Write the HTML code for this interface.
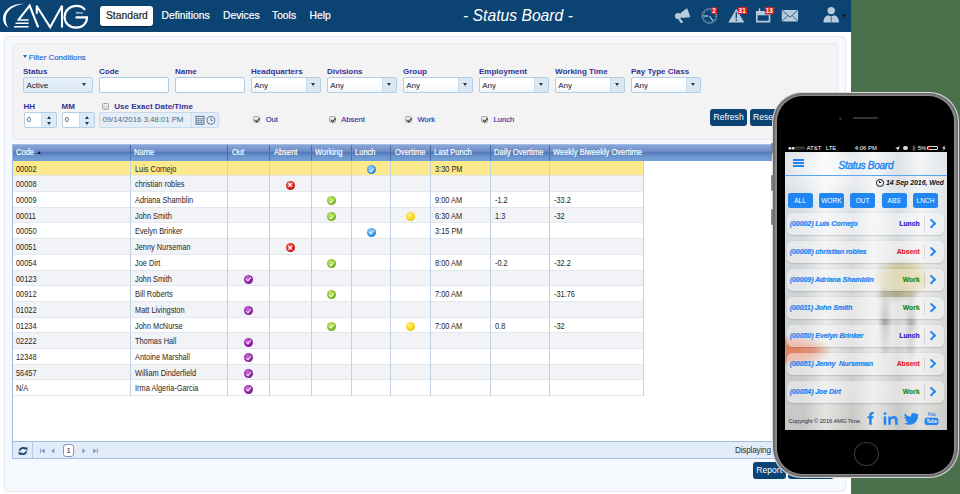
<!DOCTYPE html>
<html><head><meta charset="utf-8">
<style>
*{box-sizing:border-box;margin:0;padding:0}
html,body{width:960px;height:494px;overflow:hidden;background:#fff;font-family:"Liberation Sans",sans-serif;position:relative}
.abs{position:absolute}
#green{left:851px;top:0;width:109px;height:494px;background:#4b714c}
#hdr{left:0;top:0;width:851px;height:31.7px;background:#0b4373}
.nav{position:absolute;top:9.5px;color:#fff;font-size:10.3px;line-height:12px;white-space:nowrap;-webkit-text-stroke:0.2px currentColor}
#std{left:99.5px;top:5.5px;width:53px;height:20px;background:#fff;border-radius:3px;box-shadow:0 1px 1px rgba(0,0,0,.45)}
#title{left:463px;top:7.1px;color:#fff;font-style:italic;font-size:15.7px;line-height:18px;white-space:nowrap}
#outer{left:4px;top:36.3px;width:841.5px;height:455.5px;background:#f5f8fd;border:1px solid #e4e9f2;border-radius:4px}
#filt{left:12.2px;top:43.4px;width:825.8px;height:96.3px;background:#f3f3f3;border:1px solid #e9e9e9;border-radius:2.5px}
.lbl{position:absolute;color:#323296;font-weight:bold;font-size:8px;line-height:10px;white-space:nowrap}
.txt{position:absolute;font-size:7.6px;line-height:10px;white-space:nowrap}
.sel{position:absolute;top:77.1px;height:15.5px;width:69.5px;border:1px solid #b3cfe5;border-radius:2px;background:linear-gradient(#fff 40%,#edf4fa);font-size:8px;line-height:15px;padding-left:2.2px;color:#13233a}
.sel i{position:absolute;right:0;top:0;width:14px;height:13.5px;border-left:1px solid #c8dcec;background:#dbe8f3}
.sel i:after{content:"";position:absolute;left:4.4px;top:5.2px;border-left:2.5px solid transparent;border-right:2.5px solid transparent;border-top:3.5px solid #1d3b5c}
.sel.st{background:linear-gradient(#e8f1f9,#dae8f4)}
.sel.st i{background:none;border-left:none}
.inp{position:absolute;top:77.3px;height:15.7px;width:69.5px;border:1px solid #a9cbe3;border-radius:2px;background:#fff}
.spin{position:absolute;top:112.3px;height:15.3px;width:33.2px;border:1px solid #b3cfe5;border-radius:2px;background:#fff;font-size:7.6px;line-height:13px;padding-left:2.3px;color:#1f3550}
.spin i{position:absolute;right:0;top:0;width:14.3px;height:13.3px;border-left:1px solid #c8dcec;background:#deebf5}
.spin i:before{content:"";position:absolute;left:4.3px;top:2.3px;border-left:2.6px solid transparent;border-right:2.6px solid transparent;border-bottom:3.4px solid #1d3b5c}
.spin i:after{content:"";position:absolute;left:4.3px;top:8.6px;border-left:2.6px solid transparent;border-right:2.6px solid transparent;border-top:3.4px solid #1d3b5c}
.cb{position:absolute;width:7px;height:7px;border:1px solid #a8a8a8;border-radius:1.5px;background:linear-gradient(#eaeaea,#d4d4d4)}
.cb.on:after{content:"";position:absolute;left:1.6px;top:0.2px;width:2px;height:3.6px;border-right:1.2px solid #222;border-bottom:1.2px solid #222;transform:rotate(40deg)}
.btn{position:absolute;background:#0b4373;color:#fff;border-radius:3px;font-size:8.6px;line-height:16px;text-align:center;white-space:nowrap}
#grid{left:12px;top:143.7px;width:826px;height:315.4px;background:#fff;overflow:hidden}
#gbord{left:12px;top:143.7px;width:826px;height:315.4px;border:1px solid #9fbde3;pointer-events:none}
#ghd{position:absolute;left:0;top:0;width:826px;height:17px;background:linear-gradient(#7093cb 0%,#87a4d6 8%,#7896cc 30%,#6a89c4 45%,#4f76b6 52%,#6289c4 62%,#6f99d2 80%,#74a0d8 100%)}
.gh{position:absolute;top:0;height:16.5px;border-right:1px solid #4a6ca8;color:#fff;font-size:8.2px;line-height:18px;-webkit-text-stroke:0.15px #fff;padding-left:3.7px;white-space:nowrap}
.sort{display:inline-block;margin-left:3px;vertical-align:1px;border-left:2.5px solid transparent;border-right:2.5px solid transparent;border-bottom:3px solid #0b1e45}
.gr{position:absolute;left:0;width:632.3px;height:15.69px;border-bottom:1px solid #e3e8ef;background:#fff}
.gr.alt{background:#f2f3f6}
.gr.ys{background:#fbe98c}
.gc{position:absolute;top:0;height:15.69px;border-right:1px solid #c3d1e4;font-size:8.2px;line-height:18.3px;padding-left:4.1px;color:#1e1e1e;white-space:nowrap;overflow:hidden}
.ic{position:absolute;left:50%;top:50%;width:9px;height:9px;margin:-3.6px 0 0 -4.5px;border-radius:50%}
.icA{background:radial-gradient(circle at 40% 35%,#ff6b5e,#cc1b10 60%,#9d0b05)}
.icW{background:radial-gradient(circle at 40% 35%,#c9ec6a,#7fb52a 60%,#5a8c14)}
.icL{background:radial-gradient(circle at 40% 35%,#9fd2ff,#2e8ee8 60%,#1768c4)}
.icY{background:radial-gradient(circle at 40% 35%,#fff48a,#f4cf10 60%,#d9a900)}
.icO{background:radial-gradient(circle at 40% 35%,#d26de0,#8a1a9c 60%,#5e0a70)}
.icA:after{content:"\00d7";position:absolute;left:0;top:-1.5px;width:9px;text-align:center;color:#fff;font-size:9px;line-height:12px;font-weight:bold}
.icW:after,.icL:after,.icO:after{content:"";position:absolute;left:3.1px;top:1.6px;width:2px;height:4px;border-right:1.2px solid #fff;border-bottom:1.2px solid #fff;transform:rotate(40deg);opacity:.9}
#pbar{position:absolute;left:0;top:297.7px;width:826px;height:17.7px;background:#e2ecf9;border-top:1px solid #9fbde3}
.pb{position:absolute;top:49px;width:25px;height:15.2px;background:#1f86f2;border-radius:2.5px;color:#fff;font-size:6.6px;line-height:15.2px;text-align:center;white-space:nowrap}
.it{position:absolute;left:2px;width:157px;height:22px;border-radius:5px;background:rgba(250,250,250,.45);box-shadow:0 0.5px 1.5px rgba(0,0,0,.15)}
.nm{position:absolute;left:2.7px;top:6px;color:#1f86f2;font-style:italic;font-weight:bold;font-size:7.2px;line-height:10px;white-space:nowrap;letter-spacing:-0.15px;-webkit-text-stroke:0.2px #1f86f2}
.stt{position:absolute;right:24.3px;top:6px;font-weight:bold;font-size:6.8px;line-height:10px;white-space:nowrap;-webkit-text-stroke:0.15px currentColor}
.dv{position:absolute;left:137.2px;top:4px;width:0.7px;height:14px;background:rgba(0,0,0,.12)}
.chev{position:absolute;left:140.6px;top:7.2px;width:6.6px;height:6.6px;border-right:2px solid #1f86f2;border-top:2px solid #1f86f2;transform:rotate(45deg)}
.t{display:inline-block;transform:scaleX(.9);transform-origin:0 50%}
.gh .t{transform:scaleX(.92)}
</style></head>
<body>
<div id="green" class="abs"></div>
<div id="hdr" class="abs">
  <svg class="abs" style="left:0;top:0" width="95" height="32" viewBox="0 0 95 32">
    <path d="M24.4 3.8 C13 3.2 3 9.3 3 18.3 C3 22.7 5.3 25.9 8.4 27.7 C6.9 25.4 5.7 22.3 5.7 18.9 C5.7 11.2 12.6 5.6 24.4 3.8Z" fill="#fff"/>
    <g fill="none" stroke="#fff" stroke-width="2.1">
      <path d="M18.6 19.6 L29.7 5.6 L38.2 27.4"/>
      <path d="M36.8 5.6 L36.8 13.8 M36.5 5.8 L50.2 27.3 L62 5.8 L62 27.4"/>
      <path d="M85 9.8 C83 7.2 80 5.9 76.4 5.9 C69.6 5.9 64.6 10.8 64.6 16.9 C64.6 23.2 69.6 27.6 76.2 27.6 C82.6 27.6 87 23.2 87 17.4 L75.5 17.4"/>
    </g>
    <g stroke="#fff" stroke-width="1.5">
      <path d="M17.4 19.9 H28.6 M15.6 23.3 H28.6 M14 26.7 H28.6"/>
    </g>
    <text x="75.8" y="14.4" font-size="4" fill="#fff" font-family="Liberation Sans" letter-spacing="-0.1">time</text>
  </svg>
  <div id="std" class="abs"></div>
  <div class="nav" style="left:106px;color:#222">Standard</div>
  <div class="nav" style="left:161.5px">Definitions</div>
  <div class="nav" style="left:223px">Devices</div>
  <div class="nav" style="left:272px">Tools</div>
  <div class="nav" style="left:309.5px">Help</div>
  <div id="title" class="abs">- Status Board -</div>
  <!-- icons -->
  <svg class="abs" style="left:670px;top:0" width="181" height="32" viewBox="670 0 181 32">
    <g fill="#b6cbdc">
      <ellipse cx="678.2" cy="16" rx="3.3" ry="3.1"/>
      <path d="M680.6 13.1 L686.6 8.4 Q687.2 8.3 687.5 9 L690.2 16.6 Q690.2 17.2 689.5 17.2 L681.6 17.9 Z"/>
      <path d="M678.3 19.6 L680.6 18.7 L683.4 22.3 L681 23.3 Z"/>
      <!-- warning -->
      <path d="M736.3 8.8 L744.3 22.6 L728.3 22.6Z"/>
      <!-- calendar -->
      <path d="M756 11 H770.3 V22.4 H756Z M757.6 15.3 V20.8 H768.7 V15.3Z" fill-rule="evenodd"/>
      <path d="M758.8 8.3 h1.4 v4 h-1.4z"/>
      <!-- envelope -->
      <rect x="781.8" y="9.9" width="16.3" height="11.5" rx="0.6"/>
      <!-- user -->
      <circle cx="831.2" cy="10.6" r="3.7"/>
      <path d="M823.4 22.4 Q823.6 16.6 827.8 15.2 L831.2 16.2 L834.6 15.2 Q838.8 16.6 839 22.4 Z"/>
    </g>
    <g fill="none" stroke="#b6cbdc">
      <circle cx="709.5" cy="16" r="7.3" stroke-width="0.8" opacity="0.8"/>
      <circle cx="709.5" cy="16" r="6" stroke-width="1.2" stroke-dasharray="0.7 2.44" opacity="0.8"/>
      <path d="M703.4 16 L708.2 16" stroke-width="1.3"/>
      <path d="M709.5 16 L713.1 20.9" stroke-width="1.1"/>
    </g>
    <path d="M735.6 12.3 h1.4 v6 h-1.4z M735.6 19.6 h1.4 v1.4 h-1.4z" fill="#0b4373"/>
    <path d="M842.2 14.6 h4.4 l-2.2 2.6z" fill="#111"/>
    <g fill="none" stroke="#0b4373" stroke-width="0.8">
      <path d="M782.3 10.5 L790 17.2 L797.6 10.5 M782.3 20.9 L787.6 15.8 M797.6 20.9 L792.4 15.8"/>
      <path d="M831.2 16.4 L831.2 22.2" stroke-width="0.7"/>
    </g>
    <g fill="#d91e18">
      <rect x="711" y="7.3" width="6" height="6.8"/>
      <rect x="737.9" y="7.1" width="9.2" height="7"/>
      <rect x="764.9" y="7.1" width="9.3" height="7.3"/>
    </g>
    <g fill="#fff" font-family="Liberation Sans" font-weight="bold" font-size="6.4">
      <text x="712.2" y="13">2</text>
      <text x="738.6" y="13">31</text>
      <text x="765.7" y="13.2">13</text>
    </g>
  </svg>
</div>
<div id="outer" class="abs"></div>
<div id="filt" class="abs"></div>

<!-- filter content -->
<div class="txt" style="left:23px;top:52.6px;color:#1b6ad6;font-size:7.9px;-webkit-text-stroke:0.15px #1b6ad6"><span style="display:inline-block;width:0;height:0;border-left:2.8px solid transparent;border-right:2.8px solid transparent;border-top:3.6px solid #1b6ad6;vertical-align:1.2px;margin-right:1.8px"></span>Filter Conditions</div>
<div class="lbl" style="left:23px;top:67px">Status</div>
<div class="lbl" style="left:99px;top:67px">Code</div>
<div class="lbl" style="left:175px;top:67px">Name</div>
<div class="lbl" style="left:251px;top:67px">Headquarters</div>
<div class="lbl" style="left:327px;top:67px">Divisions</div>
<div class="lbl" style="left:403px;top:67px">Group</div>
<div class="lbl" style="left:479px;top:67px">Employment</div>
<div class="lbl" style="left:555px;top:67px">Working Time</div>
<div class="lbl" style="left:631px;top:67px">Pay Type Class</div>

<div class="sel st" style="left:23.3px">Active<i></i></div>
<div class="inp" style="left:99.3px"></div>
<div class="inp" style="left:175px"></div>
<div class="sel" style="left:251px">Any<i></i></div>
<div class="sel" style="left:327px">Any<i></i></div>
<div class="sel" style="left:403px">Any<i></i></div>
<div class="sel" style="left:479px">Any<i></i></div>
<div class="sel" style="left:555px">Any<i></i></div>
<div class="sel" style="left:631px">Any<i></i></div>

<div class="lbl" style="left:23.5px;top:101.8px">HH</div>
<div class="lbl" style="left:61.5px;top:101.8px">MM</div>
<div class="cb" style="left:101.7px;top:102.8px"></div>
<div class="lbl" style="left:114.3px;top:102px">Use Exact Date/Time</div>
<div class="spin" style="left:23.5px">0<i></i></div>
<div class="spin" style="left:61.5px">0<i></i></div>
<div class="abs" style="left:99px;top:112px;width:119.6px;height:15.5px;border:1px solid #c6daeb;border-radius:2px;background:#e5eef6;font-size:7.9px;line-height:13.8px;padding-left:2.4px;color:#4d6c88;white-space:nowrap;letter-spacing:-0.05px">09/14/2016 3:48:01 PM
  <div class="abs" style="left:91px;top:0;width:27px;height:13.5px;border-left:1px solid #cfdfec"></div>
  <svg class="abs" style="left:95px;top:2px" width="22" height="10" viewBox="0 0 22 10">
    <g fill="none" stroke="#4b6f8e" stroke-width="0.9">
      <rect x="1" y="1.3" width="8" height="8"/>
      <path d="M1 3.3 H9 M3.6 3.3 V9.3 M6.3 3.3 V9.3 M1 5.3 H9 M1 7.3 H9" stroke-width="0.6"/>
      <circle cx="15.9" cy="5.3" r="4"/>
      <path d="M15.9 2.8 V5.5 H17.8"/>
    </g>
  </svg>
</div>
<div class="cb on" style="left:253px;top:116px"></div>
<div class="txt" style="left:265.7px;top:114.8px;color:#3434a4;-webkit-text-stroke:0.15px #3434a4">Out</div>
<div class="cb on" style="left:329.2px;top:116px"></div>
<div class="txt" style="left:341.2px;top:114.8px;color:#3434a4;-webkit-text-stroke:0.15px #3434a4">Absent</div>
<div class="cb on" style="left:405px;top:116px"></div>
<div class="txt" style="left:417.5px;top:114.8px;color:#3434a4;-webkit-text-stroke:0.15px #3434a4">Work</div>
<div class="cb on" style="left:481px;top:116px"></div>
<div class="txt" style="left:493.5px;top:114.8px;color:#3434a4;-webkit-text-stroke:0.15px #3434a4">Lunch</div>
<div class="btn" style="left:710px;top:109px;width:37.3px;height:16.7px">Refresh</div>
<div class="btn" style="left:750px;top:109px;width:40px;height:16.7px;text-align:left;padding-left:3px">Reset</div>

<div id="grid" class="abs">
<div id="ghd"></div>
<div class="gh" style="left:0.00px;width:118.50px"><span class="t">Code<span class="sort"></span></span></div>
<div class="gh" style="left:118.50px;width:97.75px"><span class="t">Name</span></div>
<div class="gh" style="left:216.25px;width:41.75px"><span class="t">Out</span></div>
<div class="gh" style="left:258.00px;width:41.50px"><span class="t">Absent</span></div>
<div class="gh" style="left:299.50px;width:40.25px"><span class="t">Working</span></div>
<div class="gh" style="left:339.75px;width:39.50px"><span class="t">Lunch</span></div>
<div class="gh" style="left:379.25px;width:39.50px"><span class="t">Overtime</span></div>
<div class="gh" style="left:418.75px;width:59.75px"><span class="t">Last Punch</span></div>
<div class="gh" style="left:478.50px;width:59.00px"><span class="t">Daily Overtime</span></div>
<div class="gh" style="left:537.50px;width:94.80px;border-right:none"><span class="t">Weekly Biweekly Overtime</span></div>
<div class="gr ys" style="top:17.00px">
<div class="gc" style="left:0.00px;width:118.50px"><span class="t">00002</span></div>
<div class="gc" style="left:118.50px;width:97.75px"><span class="t">Luis Cornejo</span></div>
<div class="gc" style="left:216.25px;width:41.75px"></div>
<div class="gc" style="left:258.00px;width:41.50px"></div>
<div class="gc" style="left:299.50px;width:40.25px"></div>
<div class="gc" style="left:339.75px;width:39.50px"><b class="ic icL"></b></div>
<div class="gc" style="left:379.25px;width:39.50px"></div>
<div class="gc" style="left:418.75px;width:59.75px"><span class="t">3:30 PM</span></div>
<div class="gc" style="left:478.50px;width:59.00px"></div>
<div class="gc" style="left:537.50px;width:94.80px"></div>
</div>
<div class="gr alt" style="top:32.69px">
<div class="gc" style="left:0.00px;width:118.50px"><span class="t">00008</span></div>
<div class="gc" style="left:118.50px;width:97.75px"><span class="t">christian robles</span></div>
<div class="gc" style="left:216.25px;width:41.75px"></div>
<div class="gc" style="left:258.00px;width:41.50px"><b class="ic icA"></b></div>
<div class="gc" style="left:299.50px;width:40.25px"></div>
<div class="gc" style="left:339.75px;width:39.50px"></div>
<div class="gc" style="left:379.25px;width:39.50px"></div>
<div class="gc" style="left:418.75px;width:59.75px"></div>
<div class="gc" style="left:478.50px;width:59.00px"></div>
<div class="gc" style="left:537.50px;width:94.80px"></div>
</div>
<div class="gr" style="top:48.38px">
<div class="gc" style="left:0.00px;width:118.50px"><span class="t">00009</span></div>
<div class="gc" style="left:118.50px;width:97.75px"><span class="t">Adriana Shamblin</span></div>
<div class="gc" style="left:216.25px;width:41.75px"></div>
<div class="gc" style="left:258.00px;width:41.50px"></div>
<div class="gc" style="left:299.50px;width:40.25px"><b class="ic icW"></b></div>
<div class="gc" style="left:339.75px;width:39.50px"></div>
<div class="gc" style="left:379.25px;width:39.50px"></div>
<div class="gc" style="left:418.75px;width:59.75px"><span class="t">9:00 AM</span></div>
<div class="gc" style="left:478.50px;width:59.00px"><span class="t">-1.2</span></div>
<div class="gc" style="left:537.50px;width:94.80px"><span class="t">-33.2</span></div>
</div>
<div class="gr alt" style="top:64.07px">
<div class="gc" style="left:0.00px;width:118.50px"><span class="t">00011</span></div>
<div class="gc" style="left:118.50px;width:97.75px"><span class="t">John Smith</span></div>
<div class="gc" style="left:216.25px;width:41.75px"></div>
<div class="gc" style="left:258.00px;width:41.50px"></div>
<div class="gc" style="left:299.50px;width:40.25px"><b class="ic icW"></b></div>
<div class="gc" style="left:339.75px;width:39.50px"></div>
<div class="gc" style="left:379.25px;width:39.50px"><b class="ic icY"></b></div>
<div class="gc" style="left:418.75px;width:59.75px"><span class="t">6:30 AM</span></div>
<div class="gc" style="left:478.50px;width:59.00px"><span class="t">1.3</span></div>
<div class="gc" style="left:537.50px;width:94.80px"><span class="t">-32</span></div>
</div>
<div class="gr" style="top:79.76px">
<div class="gc" style="left:0.00px;width:118.50px"><span class="t">00050</span></div>
<div class="gc" style="left:118.50px;width:97.75px"><span class="t">Evelyn Brinker</span></div>
<div class="gc" style="left:216.25px;width:41.75px"></div>
<div class="gc" style="left:258.00px;width:41.50px"></div>
<div class="gc" style="left:299.50px;width:40.25px"></div>
<div class="gc" style="left:339.75px;width:39.50px"><b class="ic icL"></b></div>
<div class="gc" style="left:379.25px;width:39.50px"></div>
<div class="gc" style="left:418.75px;width:59.75px"><span class="t">3:15 PM</span></div>
<div class="gc" style="left:478.50px;width:59.00px"></div>
<div class="gc" style="left:537.50px;width:94.80px"></div>
</div>
<div class="gr alt" style="top:95.45px">
<div class="gc" style="left:0.00px;width:118.50px"><span class="t">00051</span></div>
<div class="gc" style="left:118.50px;width:97.75px"><span class="t">Jenny Nurseman</span></div>
<div class="gc" style="left:216.25px;width:41.75px"></div>
<div class="gc" style="left:258.00px;width:41.50px"><b class="ic icA"></b></div>
<div class="gc" style="left:299.50px;width:40.25px"></div>
<div class="gc" style="left:339.75px;width:39.50px"></div>
<div class="gc" style="left:379.25px;width:39.50px"></div>
<div class="gc" style="left:418.75px;width:59.75px"></div>
<div class="gc" style="left:478.50px;width:59.00px"></div>
<div class="gc" style="left:537.50px;width:94.80px"></div>
</div>
<div class="gr" style="top:111.14px">
<div class="gc" style="left:0.00px;width:118.50px"><span class="t">00054</span></div>
<div class="gc" style="left:118.50px;width:97.75px"><span class="t">Joe Dirt</span></div>
<div class="gc" style="left:216.25px;width:41.75px"></div>
<div class="gc" style="left:258.00px;width:41.50px"></div>
<div class="gc" style="left:299.50px;width:40.25px"><b class="ic icW"></b></div>
<div class="gc" style="left:339.75px;width:39.50px"></div>
<div class="gc" style="left:379.25px;width:39.50px"></div>
<div class="gc" style="left:418.75px;width:59.75px"><span class="t">8:00 AM</span></div>
<div class="gc" style="left:478.50px;width:59.00px"><span class="t">-0.2</span></div>
<div class="gc" style="left:537.50px;width:94.80px"><span class="t">-32.2</span></div>
</div>
<div class="gr alt" style="top:126.83px">
<div class="gc" style="left:0.00px;width:118.50px"><span class="t">00123</span></div>
<div class="gc" style="left:118.50px;width:97.75px"><span class="t">John Smith</span></div>
<div class="gc" style="left:216.25px;width:41.75px"><b class="ic icO"></b></div>
<div class="gc" style="left:258.00px;width:41.50px"></div>
<div class="gc" style="left:299.50px;width:40.25px"></div>
<div class="gc" style="left:339.75px;width:39.50px"></div>
<div class="gc" style="left:379.25px;width:39.50px"></div>
<div class="gc" style="left:418.75px;width:59.75px"></div>
<div class="gc" style="left:478.50px;width:59.00px"></div>
<div class="gc" style="left:537.50px;width:94.80px"></div>
</div>
<div class="gr" style="top:142.52px">
<div class="gc" style="left:0.00px;width:118.50px"><span class="t">00912</span></div>
<div class="gc" style="left:118.50px;width:97.75px"><span class="t">Bill Roberts</span></div>
<div class="gc" style="left:216.25px;width:41.75px"></div>
<div class="gc" style="left:258.00px;width:41.50px"></div>
<div class="gc" style="left:299.50px;width:40.25px"><b class="ic icW"></b></div>
<div class="gc" style="left:339.75px;width:39.50px"></div>
<div class="gc" style="left:379.25px;width:39.50px"></div>
<div class="gc" style="left:418.75px;width:59.75px"><span class="t">7:00 AM</span></div>
<div class="gc" style="left:478.50px;width:59.00px"></div>
<div class="gc" style="left:537.50px;width:94.80px"><span class="t">-31.76</span></div>
</div>
<div class="gr alt" style="top:158.21px">
<div class="gc" style="left:0.00px;width:118.50px"><span class="t">01022</span></div>
<div class="gc" style="left:118.50px;width:97.75px"><span class="t">Matt Livingston</span></div>
<div class="gc" style="left:216.25px;width:41.75px"><b class="ic icO"></b></div>
<div class="gc" style="left:258.00px;width:41.50px"></div>
<div class="gc" style="left:299.50px;width:40.25px"></div>
<div class="gc" style="left:339.75px;width:39.50px"></div>
<div class="gc" style="left:379.25px;width:39.50px"></div>
<div class="gc" style="left:418.75px;width:59.75px"></div>
<div class="gc" style="left:478.50px;width:59.00px"></div>
<div class="gc" style="left:537.50px;width:94.80px"></div>
</div>
<div class="gr" style="top:173.90px">
<div class="gc" style="left:0.00px;width:118.50px"><span class="t">01234</span></div>
<div class="gc" style="left:118.50px;width:97.75px"><span class="t">John McNurse</span></div>
<div class="gc" style="left:216.25px;width:41.75px"></div>
<div class="gc" style="left:258.00px;width:41.50px"></div>
<div class="gc" style="left:299.50px;width:40.25px"><b class="ic icW"></b></div>
<div class="gc" style="left:339.75px;width:39.50px"></div>
<div class="gc" style="left:379.25px;width:39.50px"><b class="ic icY"></b></div>
<div class="gc" style="left:418.75px;width:59.75px"><span class="t">7:00 AM</span></div>
<div class="gc" style="left:478.50px;width:59.00px"><span class="t">0.8</span></div>
<div class="gc" style="left:537.50px;width:94.80px"><span class="t">-32</span></div>
</div>
<div class="gr alt" style="top:189.59px">
<div class="gc" style="left:0.00px;width:118.50px"><span class="t">02222</span></div>
<div class="gc" style="left:118.50px;width:97.75px"><span class="t">Thomas Hall</span></div>
<div class="gc" style="left:216.25px;width:41.75px"><b class="ic icO"></b></div>
<div class="gc" style="left:258.00px;width:41.50px"></div>
<div class="gc" style="left:299.50px;width:40.25px"></div>
<div class="gc" style="left:339.75px;width:39.50px"></div>
<div class="gc" style="left:379.25px;width:39.50px"></div>
<div class="gc" style="left:418.75px;width:59.75px"></div>
<div class="gc" style="left:478.50px;width:59.00px"></div>
<div class="gc" style="left:537.50px;width:94.80px"></div>
</div>
<div class="gr" style="top:205.28px">
<div class="gc" style="left:0.00px;width:118.50px"><span class="t">12348</span></div>
<div class="gc" style="left:118.50px;width:97.75px"><span class="t">Antoine Marshall</span></div>
<div class="gc" style="left:216.25px;width:41.75px"><b class="ic icO"></b></div>
<div class="gc" style="left:258.00px;width:41.50px"></div>
<div class="gc" style="left:299.50px;width:40.25px"></div>
<div class="gc" style="left:339.75px;width:39.50px"></div>
<div class="gc" style="left:379.25px;width:39.50px"></div>
<div class="gc" style="left:418.75px;width:59.75px"></div>
<div class="gc" style="left:478.50px;width:59.00px"></div>
<div class="gc" style="left:537.50px;width:94.80px"></div>
</div>
<div class="gr alt" style="top:220.97px">
<div class="gc" style="left:0.00px;width:118.50px"><span class="t">56457</span></div>
<div class="gc" style="left:118.50px;width:97.75px"><span class="t">William Dinderfield</span></div>
<div class="gc" style="left:216.25px;width:41.75px"><b class="ic icO"></b></div>
<div class="gc" style="left:258.00px;width:41.50px"></div>
<div class="gc" style="left:299.50px;width:40.25px"></div>
<div class="gc" style="left:339.75px;width:39.50px"></div>
<div class="gc" style="left:379.25px;width:39.50px"></div>
<div class="gc" style="left:418.75px;width:59.75px"></div>
<div class="gc" style="left:478.50px;width:59.00px"></div>
<div class="gc" style="left:537.50px;width:94.80px"></div>
</div>
<div class="gr" style="top:236.66px">
<div class="gc" style="left:0.00px;width:118.50px"><span class="t">N/A</span></div>
<div class="gc" style="left:118.50px;width:97.75px"><span class="t">Irma Algeria-Garcia</span></div>
<div class="gc" style="left:216.25px;width:41.75px"><b class="ic icO"></b></div>
<div class="gc" style="left:258.00px;width:41.50px"></div>
<div class="gc" style="left:299.50px;width:40.25px"></div>
<div class="gc" style="left:339.75px;width:39.50px"></div>
<div class="gc" style="left:379.25px;width:39.50px"></div>
<div class="gc" style="left:418.75px;width:59.75px"></div>
<div class="gc" style="left:478.50px;width:59.00px"></div>
<div class="gc" style="left:537.50px;width:94.80px"></div>
</div>
<div id="pbar">
  <div class="abs" style="left:19.5px;top:0;width:1px;height:16px;background:#b7cbe6"></div>
  <svg class="abs" style="left:5.8px;top:4px" width="10" height="10" viewBox="0 0 10 10"><g fill="none" stroke="#26486c" stroke-width="1.9"><path d="M1.6 4.6 A3.4 3.4 0 0 1 7.6 3.2"/><path d="M8.4 5.4 A3.4 3.4 0 0 1 2.4 6.8"/></g><path d="M6 1.2 L9.6 1.4 L9.2 5 Z M4 8.8 L0.4 8.6 L0.8 5 Z" fill="#26486c"/></svg>
  <svg class="abs" style="left:26px;top:4px" width="70" height="10" viewBox="0 0 70 10">
    <g fill="#7396c6"><path d="M1.9 2.6 h0.9 v4.6 H1.9z M3.2 4.9 L6.7 2.6 V7.2z M13.2 4.9 L16.4 2.6 V7.2z M44.4 2.6 L47.6 4.9 L44.4 7.2z M55.2 2.6 L58.4 4.9 L55.2 7.2z M58.8 2.6 h0.9 v4.6 H58.8z"/></g>
  </svg>
  <div class="abs" style="left:51.4px;top:1.6px;width:10.4px;height:13.4px;border:1px solid #7f9ab8;border-radius:3px;background:#fff;font-size:7.5px;line-height:11.5px;text-align:center;color:#222">1</div>
  <div class="txt" style="left:723px;top:3.6px;color:#333;font-size:8.2px;letter-spacing:-0.2px">Displaying</div>
</div>
</div>
<div id="gbord" class="abs"></div>
<div class="btn" style="left:752.5px;top:462px;width:33.3px;height:17px;line-height:17px">Report</div>
<div class="btn" style="left:788px;top:462px;width:46px;height:17px"></div>

<!-- PHONE -->
<div class="abs" style="left:772.4px;top:92.2px;width:186.8px;height:385.5px;border-radius:30px;background:#d8d8d8"></div>
<div class="abs" style="left:773.2px;top:93px;width:185.2px;height:383.9px;border-radius:29.2px;background:#6f6f6f"></div>
<div class="abs" style="left:775.2px;top:95px;width:180.6px;height:380.3px;border-radius:27px;background:#8a8a8a"></div>
<div class="abs" style="left:776.7px;top:95.9px;width:177.1px;height:378.2px;border-radius:25.5px;background:#000"></div>
<div class="abs" style="left:771.2px;top:143px;width:2px;height:11px;border-radius:1px;background:#858585"></div>
<div class="abs" style="left:771.2px;top:174.6px;width:2px;height:16px;border-radius:1px;background:#858585"></div>
<div class="abs" style="left:771.2px;top:208.6px;width:2px;height:16px;border-radius:1px;background:#858585"></div>
<div class="abs" style="left:838.5px;top:116.5px;width:3px;height:3px;border-radius:50%;background:#1c2740"></div>
<div class="abs" style="left:853px;top:116.8px;width:25px;height:2.4px;border-radius:1.2px;background:#333"></div>
<div class="abs" style="left:853.8px;top:441.6px;width:24.8px;height:24.4px;border-radius:50%;border:1px solid #3c3c3c"></div>
<!-- screen -->
<div class="abs" style="left:785px;top:144px;width:162px;height:286px;overflow:hidden;background:#000">
  <!-- status bar -->
  <div class="abs" style="left:0;top:0;width:162px;height:8px;background:#000;color:#fff;font-size:6px;line-height:8px;white-space:nowrap">
    <span class="abs" style="left:3px;top:0;letter-spacing:-0.3px">&#9679;&#9679;&#9675;&#9675;&#9675;</span>
    <span class="abs" style="left:21.5px;top:0">AT&amp;T</span>
    <span class="abs" style="left:40.8px;top:0">LTE</span>
    <span class="abs" style="left:69.7px;top:0">4:06 PM</span>
    <svg class="abs" style="left:109.5px;top:1.6px" width="5" height="5" viewBox="0 0 5 5"><path d="M4.8 0.2 L0.2 2.2 L2.3 2.7 L2.8 4.8Z" fill="#fff"/></svg>
    <span class="abs" style="left:117.8px;top:1.8px;width:5px;height:4.6px;border-radius:50%;background:#ddd"></span>
    <svg class="abs" style="left:126.8px;top:0.8px" width="4" height="6.5" viewBox="0 0 4 6.5"><path d="M0.4 1.8 L3.2 4.6 L1.8 5.9 V0.6 L3.2 1.9 L0.4 4.7" fill="none" stroke="#999" stroke-width="0.6"/></svg>
    <span class="abs" style="left:132.7px;top:0">5%</span>
    <span class="abs" style="left:142.4px;top:1.8px;width:11px;height:4.6px;border:0.7px solid #ddd;border-radius:1px"></span>
    <span class="abs" style="left:143.1px;top:2.5px;width:1px;height:3.2px;background:#e22"></span>
    <svg class="abs" style="left:156.8px;top:1.2px" width="4" height="6" viewBox="0 0 4 6"><path d="M2.6 0 L0.4 3.4 H1.9 L1.3 6 L3.6 2.5 H2.1Z" fill="#fff"/></svg>
  </div>
  <!-- blurred background -->
  <div class="abs" style="left:0;top:8px;width:162px;height:278px;background:
    radial-gradient(ellipse 32px 20px at 118px 126px, rgba(200,185,100,.95), rgba(200,185,100,.6) 50%, rgba(200,185,100,0) 100%),
    radial-gradient(ellipse 24px 10px at 112px 142px, rgba(140,130,90,.6), rgba(140,130,90,0) 100%),
    radial-gradient(ellipse 42px 16px at 6px 199px, rgba(226,128,95,1), rgba(226,128,95,.75) 55%, rgba(226,128,95,0) 100%),
    radial-gradient(ellipse 7px 40px at 100px 168px, rgba(120,118,110,.6), rgba(120,118,110,0) 100%),
    radial-gradient(ellipse 7px 40px at 126px 172px, rgba(120,118,110,.5), rgba(120,118,110,0) 100%),
    radial-gradient(ellipse 60px 30px at 40px 20px, rgba(255,255,255,.7), rgba(255,255,255,0) 100%),
    linear-gradient(90deg, rgba(200,205,212,.45) 0, rgba(205,210,215,.35) 12%, rgba(255,255,255,.55) 25%, rgba(210,212,215,.35) 42%, rgba(255,255,255,.55) 55%, rgba(205,208,212,.35) 70%, rgba(255,255,255,.5) 83%, rgba(215,218,220,.35) 100%),
    linear-gradient(#e9edf1 0%, #e2e6e9 25%, #d6d8d7 50%, #d0d0cc 75%, #c2c0ba 100%)"></div>
  <!-- header -->
  <div class="abs" style="left:7.8px;top:15.4px;width:11px;height:1.9px;background:#1f86f2;box-shadow:0 3px 0 #1f86f2,0 6px 0 #1f86f2"></div>
  <div class="abs" style="left:53.5px;top:14.8px;color:#1f86f2;font-style:italic;font-size:10.2px;line-height:13px;white-space:nowrap;letter-spacing:-0.35px;-webkit-text-stroke:0.4px #1f86f2">Status Board</div>
  <div class="abs" style="left:0;top:31px;width:162px;height:1px;background:#5aa5f2"></div>
  <!-- date -->
  <div class="abs" style="left:91px;top:35px;width:7.6px;height:7.6px;border:1.1px solid #111;border-radius:50%"></div>
  <div class="abs" style="left:94.2px;top:36.8px;width:2px;height:2.4px;border-left:0.9px solid #111;border-bottom:0.9px solid #111"></div>
  <div class="abs" style="left:101px;top:34.2px;color:#111;font-style:italic;font-weight:bold;font-size:7px;line-height:10px;white-space:nowrap;letter-spacing:-0.05px">14 Sep 2016, Wed</div>
  <!-- filter buttons -->
  <div class="pb" style="left:2.5px">ALL</div>
  <div class="pb" style="left:33.9px">WORK</div>
  <div class="pb" style="left:65.2px">OUT</div>
  <div class="pb" style="left:96.6px">ABS</div>
  <div class="pb" style="left:128px">LNCH</div>
  <div class="it" style="top:69px"><span class="nm">(00002) Luis Cornejo</span><span class="stt" style="color:#1c1cd2">Lunch</span><i class="dv"></i><i class="chev"></i></div>
  <div class="it" style="top:97px"><span class="nm">(00008) christian robles</span><span class="stt" style="color:#e41e1e">Absent</span><i class="dv"></i><i class="chev"></i></div>
  <div class="it" style="top:125px"><span class="nm">(00009) Adriana Shamblin</span><span class="stt" style="color:#178a17">Work</span><i class="dv"></i><i class="chev"></i></div>
  <div class="it" style="top:153px"><span class="nm">(00011) John Smith</span><span class="stt" style="color:#178a17">Work</span><i class="dv"></i><i class="chev"></i></div>
  <div class="it" style="top:181px"><span class="nm">(00050) Evelyn Brinker</span><span class="stt" style="color:#1c1cd2">Lunch</span><i class="dv"></i><i class="chev"></i></div>
  <div class="it" style="top:209px"><span class="nm">(00051) Jenny&nbsp; Nurseman</span><span class="stt" style="color:#e41e1e">Absent</span><i class="dv"></i><i class="chev"></i></div>
  <div class="it" style="top:237px"><span class="nm">(00054) Joe Dirt</span><span class="stt" style="color:#178a17">Work</span><i class="dv"></i><i class="chev"></i></div>
  <!-- footer -->
  <div class="abs" style="left:3.6px;top:273.6px;color:#2a2a2a;font-size:5.8px;line-height:6px;letter-spacing:-0.1px;white-space:nowrap">Copyright &#169; 2016 AMG Time.</div>
  <svg class="abs" style="left:80px;top:266px" width="82" height="16" viewBox="865 410 82 16">
    <g fill="#1f86f2">
      <path d="M869.2 424.8 V418.3 H867.5 V416.2 H869.2 V414.9 Q869.2 412 872.1 412 L873.8 412.1 V414.1 H872.8 Q871.7 414.1 871.7 415.1 V416.2 H873.7 L873.4 418.3 H871.7 V424.8Z"/>
      <rect x="883.7" y="416.4" width="2.5" height="8.4"/>
      <circle cx="884.95" cy="413.6" r="1.45"/>
      <path d="M888.3 416.4 H890.7 V417.6 Q891.6 416.1 893.8 416.1 Q897.6 416.1 897.6 420.3 V424.8 H895.1 V420.8 Q895.1 418.4 893.4 418.4 Q890.8 418.4 890.8 421 V424.8 H888.3Z"/>
      <path d="M918.6 414.4 Q917.7 414.8 916.8 414.9 Q917.8 414.3 918.1 413.3 Q917.2 413.8 916.2 414 Q915.3 413 913.9 413 Q911 413 911 416 L911.1 416.7 Q907.1 416.5 904.6 413.5 Q903.6 415.6 905.6 417.3 Q904.9 417.3 904.3 416.9 Q904.3 419 906.8 419.9 Q906.1 420.1 905.4 420 Q906 421.9 908.4 422 Q906.4 423.5 903.8 423.3 Q906.3 424.8 909.2 424.8 Q914.8 424.8 917.2 419.8 Q918 418 917.9 415.8 Q918.5 415.2 918.6 414.4Z"/>
      <rect x="924.6" y="417.7" width="13.8" height="7.2" rx="2"/>
    </g>
    <g font-family="Liberation Sans" font-weight="bold" font-size="4.6">
      <text x="927.3" y="416.3" fill="#1f86f2">You</text>
      <text x="926.4" y="423.2" fill="#e8eef5">Tube</text>
    </g>
  </svg>
</div>

</body></html>
